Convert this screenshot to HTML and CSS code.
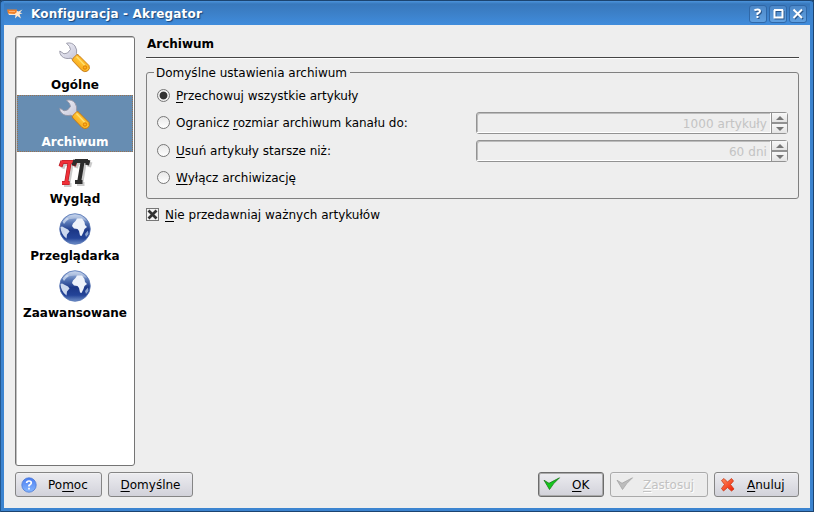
FILE: index.html
```
<!DOCTYPE html>
<html lang="pl">
<head>
<meta charset="utf-8">
<title>Konfiguracja - Akregator</title>
<link rel="stylesheet" href="styles.css">
</head>
<body>
<svg width="0" height="0" class="defs" aria-hidden="true">
  <defs>
    <linearGradient id="steel" x1="0" y1="0" x2="1" y2="1"><stop offset="0" stop-color="#f4f4fa"/><stop offset="1" stop-color="#c0c0d4"/></linearGradient>
    <linearGradient id="amber" x1="0" y1="1" x2="1" y2="0"><stop offset="0" stop-color="#e88a08"/><stop offset=".5" stop-color="#ffc030"/><stop offset="1" stop-color="#f09a10"/></linearGradient>
    <linearGradient id="sea" x1="0" y1="0" x2="0" y2="1"><stop offset="0" stop-color="#b4c8e8"/><stop offset=".3" stop-color="#5474b4"/><stop offset=".55" stop-color="#1c3888"/><stop offset=".8" stop-color="#244498"/><stop offset="1" stop-color="#7090c8"/></linearGradient>
    <linearGradient id="help" x1="0" y1="0" x2="0" y2="1"><stop offset="0" stop-color="#4a7cf0"/><stop offset="1" stop-color="#86b8ff"/></linearGradient>
    <linearGradient id="red" x1="0" y1="0" x2="1" y2="1"><stop offset="0" stop-color="#ff9060"/><stop offset="1" stop-color="#f01800"/></linearGradient>
    <symbol id="wrench" viewBox="0 0 32 32">
      <path d="M12 17 16 13 29 26Q30 30 26 30Q22 29 21 27Z" fill="#999" opacity=".35"/>
      <path d="M7.500 1.200Q13 0 16 4Q18.500 8 17.500 11.500L20 14.500 15.500 18.500 12 16.200Q6 17.500 2.500 14Q.5 11.500 .8 9L5 11.800 8.500 11 11.500 7.500 10.500 4.500Z" fill="url(#steel)" stroke="#9494a4" stroke-width=".9"/>
      <path d="M17.700 12.700Q19 12.200 20.500 14L30 23.500Q31.500 27 28.500 29Q25.500 30.500 23 28.500L13.800 19Q12.800 17.500 14 16.300Z" fill="url(#amber)" stroke="#c07008" stroke-width=".8"/>
      <path d="M17.500 14.500 26 23.500" stroke="#ffe070" stroke-width="1.500"/>
      <circle cx="26" cy="25.500" r="1.700" fill="#ffb020" stroke="#d87800" stroke-width=".9"/>
    </symbol>
    <symbol id="globe" viewBox="0 0 32 32">
      <circle cx="16" cy="16" r="15.300" fill="url(#sea)" stroke="#5474b4" stroke-width=".8"/>
      <path d="M1.500 14Q3 13 5 14.500L9 16.500 10.500 18.500 8 21.500 7.500 25.500Q1.500 21 1.500 14Z" fill="#ccd8ee"/>
      <path d="M3.500 8.500 8 4.500 10 6 7 8.500 5 11Z" fill="#b4c6e4"/>
      <path d="M14 10.500 16.500 8 18 5.500 23 5.500 25.500 9 26 12 28 14 25.500 16 24.500 19 22.500 23 21 22.500 20 18 18.500 16 15 15.500 13 13Z" fill="#eef2fa"/>
      <path d="M26 21 29 17.500 29.500 21 27 24Z" fill="#8ca4d0"/>
      <path d="M4 8Q9 1 16 1.500Q24 1.500 28 8Q16 3 4 8Z" fill="#fff" opacity=".3"/>
    </symbol>
    <symbol id="slab" viewBox="0 0 32 34">
      <path d="M5 6H18M12.700 6 9.300 26M5 27H12.500M5.500 5 3.500 10.500M18.500 5 17 10"/>
    </symbol>
    <symbol id="check" viewBox="0 0 18 16"><path d="M1 3.200 6 6.300 16.500 .8Q10 6.500 6.500 12.500Q4.500 9 1 3.200Z"/></symbol>
  </defs>
</svg>
<div class="window">
  <header class="titlebar">
    <svg class="app-icon" width="16" height="12" viewBox="0 0 16 12">
      <path d="M8 2 11.500 3.500 15.500 1.500 13 4.500 15.500 5.200 12.500 6.200 14 10.500 10.500 8 8 10.500 8.500 7 2 7 1 5Z" fill="#ffe8d0"/>
      <path d="M0 1.500H10L9.500 4.500 7.500 6 1 5.500Z" fill="#f08028"/><path d="M2 3.500H8" stroke="#ffb070" stroke-width="1"/>
    </svg>
    <h1>Konfiguracja - Akregator</h1>
    <div class="controls">
      <button class="ctl" aria-label="Pomoc"><svg width="16" height="16"><path d="M4.500 5.500Q5 4.500 7.500 4.500Q10 4.500 10 6.200Q10 7.500 7.500 8.500V10M7.500 11V13"/></svg></button>
      <button class="ctl" aria-label="Maksymalizuj"><svg width="16" height="16"><path d="M4 5H13M4.500 5V12.500H12.500V5" stroke-width="1.400"/></svg></button>
      <button class="ctl" aria-label="Zamknij"><svg width="16" height="16"><path d="M3.500 4.500 12 13M12 4.500 3.500 13"/></svg></button>
    </div>
  </header>
  <div class="body">
    <div class="columns">
      <nav class="sidebar">
        <a class="item"><svg width="32" height="32"><use href="#wrench"/></svg><span>Ogólne</span></a>
        <a class="item selected"><svg width="32" height="32"><use href="#wrench"/></svg><span>Archiwum</span></a>
        <a class="item"><svg width="32" height="32" class="fonts">
          <g class="t-shade"><use href="#slab" x="0" y="2" width="32" height="34"/><use href="#slab" x="13" y="1" width="32" height="34"/></g>
          <use href="#slab" x="-2" y="0" width="32" height="34" class="t-red-edge"/><use href="#slab" x="-2" y="0" width="32" height="34" class="t-red"/>
          <use href="#slab" x="11" y="-1" width="32" height="34" class="t-black"/></svg><span>Wygląd</span></a>
        <a class="item"><svg width="32" height="32"><use href="#globe"/></svg><span>Przeglądarka</span></a>
        <a class="item"><svg width="32" height="32"><use href="#globe"/></svg><span>Zaawansowane</span></a>
      </nav>
      <main>
        <h2>Archiwum</h2>
        <fieldset>
          <legend>Domyślne ustawienia archiwum</legend>
          <div class="row"><i class="radio on"></i><label><u>P</u>rzechowuj wszystkie artykuły</label></div>
          <div class="row spinrow"><i class="radio"></i><label>Ogranicz <u>r</u>ozmiar archiwum kanału do:</label>
            <div class="spin"><span>1000 artykuły</span><div class="steps"><b><i class="up"></i></b><b><i class="down"></i></b></div></div></div>
          <div class="row spinrow"><i class="radio"></i><label><u>U</u>suń artykuły starsze niż:</label>
            <div class="spin"><span>60 dni</span><div class="steps"><b><i class="up"></i></b><b><i class="down"></i></b></div></div></div>
          <div class="row"><i class="radio"></i><label><u>W</u>yłącz archiwizację</label></div>
        </fieldset>
        <div class="checkrow"><span class="checkbox"><svg width="11" height="11"><path d="M1.500 1.500 9.500 9.500M9.500 1.500 1.500 9.500"/></svg></span><label><u>N</u>ie przedawniaj ważnych artykułów</label></div>
      </main>
    </div>
    <footer>
      <button class="btn help"><svg width="16" height="16"><circle cx="8" cy="8" r="7.200" fill="url(#help)" stroke="#4878d8" stroke-width=".8"/><path d="M5.600 6Q5.800 4 8 4Q10.300 4 10.300 6Q10.300 7 8 8.500V9.500M8 10.700V12.500" fill="none" stroke="#fff" stroke-width="1.700"/></svg><span>Po<u>m</u>oc</span></button>
      <button class="btn defaults"><span><u>D</u>omyślne</span></button>
      <button class="btn ok"><svg width="18" height="16" fill="#12c81c" stroke="#187818" stroke-width=".8"><use href="#check"/></svg><span><u>O</u>K</span></button>
      <button class="btn apply" disabled><svg width="18" height="16" fill="#bcbcbc" stroke="#a4a4a4" stroke-width=".8"><use href="#check"/></svg><span><u>Z</u>astosuj</span></button>
      <button class="btn cancel"><svg width="16" height="16"><path d="M1.500 3.500 4 1.500 7.500 5 11.500 1.500 13.500 4 10.500 7.500 14 12 11.500 14 7.500 10.500 3.500 14 1.500 11.500 4.500 7.500Z" fill="url(#red)" stroke="#c83818" stroke-width=".8"/></svg><span><u>A</u>nuluj</span></button>
    </footer>
  </div>
</div>
</body>
</html>
```
FILE: styles.css
```
* { box-sizing: border-box; }
body { margin: 0; font: 12px/14px "DejaVu Sans", sans-serif; color: #000; background: #1c3c60; }
.defs { position: absolute; }
svg { display: block; flex: none; }
h1, h2 { margin: 0; font-size: 12px; font-weight: bold; }
button { font: inherit; color: inherit; padding: 0; margin: 0; }
u { text-decoration: underline; text-decoration-thickness: 1px; text-underline-offset: 2px; text-decoration-skip-ink: none; }

.window { width: 814px; height: 512px; display: flex; flex-direction: column; padding: 1px 4px 4px; border-radius: 4px 4px 0 0; background: #3c84d0; box-shadow: inset 0 1px #1c4470, inset 1px 0 #245890, inset -1px -1px #1c4470; }
.titlebar { height: 24px; flex: none; display: flex; align-items: center; padding: 0 3px; background: linear-gradient(#4c94dc, #3878bc 3px, #3c80c8 12px, #408cdc); }
.app-icon { margin-top: 1px; }
.titlebar h1 { margin-left: 8px; padding-top: 1px; flex: 1; color: #fff; letter-spacing: .17px; text-shadow: 1px 1px 1px #1c4474; }
.controls { display: flex; gap: 2px; padding-top: 1px; }
.ctl { width: 18px; height: 18px; border: 1px solid #3068a8; border-radius: 3px; background: linear-gradient(#4c88c8, #60a0e0); }
.ctl path { fill: none; stroke: #fff; stroke-width: 2; }
.ctl svg { margin-top: -1px; filter: drop-shadow(1px 1px 0 #285488); }

.body { flex: 1; display: flex; flex-direction: column; padding: 11px 11px; background: #eee; }
.columns { display: flex; gap: 11px; height: 430px; }
.sidebar { width: 120px; border: 1px solid #747474; border-radius: 3px; padding: 1px; background: #fff; box-shadow: inset 1px 1px #c0c0c0; }
.item { height: 57px; display: flex; flex-direction: column; align-items: center; padding-top: 4px; font-weight: bold; }
.item span { margin-top: 4px; }
.selected { color: #fff; background: #678db2; outline: 1px dotted #987250; outline-offset: -1px; }
.fonts { overflow: visible; fill: none; stroke-width: 4; }
.t-red { stroke: #f03038; stroke-width: 2.800; }
.t-red-edge { stroke: #a81820; }
.t-black { stroke: #2c2c2c; }
.t-shade { stroke: #000; opacity: .2; }

main { flex: 1; }
h2 { height: 22px; padding: 1px 1px 0; border-bottom: 1px solid #444; box-shadow: 0 1px #fff; }
fieldset { position: relative; margin: 14px 0 0; height: 127px; border: 1px solid #808080; border-radius: 3px; padding: 14px 10px 0; min-width: 0; }
legend { position: absolute; left: 7px; top: -7px; padding: 0 3px 0 2px; background: #eee; }
.row { display: flex; align-items: center; height: 18px; }
.spinrow { height: 22px; margin-top: 7px; }
.spinrow + .spinrow { margin-top: 6px; }
.spinrow + .row:last-child { margin-top: 7px; }
.radio { width: 13px; height: 13px; flex: none; margin-bottom: 2px; border: 1px solid #777; border-radius: 50%; background: linear-gradient(#e8e8e8, #fff); }
.radio.on { background: radial-gradient(circle, #333 0 3.500px, #f0f0f0 4.300px); }
.row label { margin-left: 6px; }
.spin { margin-left: auto; width: 312px; height: 22px; display: flex; border: 1px solid #929292; border-radius: 3px; box-shadow: inset 1px 1px #bbb; color: #c3c3c3; letter-spacing: .08px; }
.spin span { flex: 1; text-align: right; padding: 4px 3px 0; border-right: 1px solid #fff; border-bottom: 1px solid #fff; }
.steps { width: 16px; border-left: 1px solid #929292; display: flex; flex-direction: column; }
.steps b { flex: 1; display: grid; place-items: center; background: linear-gradient(#f8f8f8, #e4e4e4); }
.steps b + b { border-top: 2px solid #929292; }
.up, .down { border: 4px solid transparent; border-top: 0; border-bottom: 4px solid #777; }
.down { border-bottom: 0; border-top: 4px solid #777; }
.checkrow { display: flex; align-items: center; margin-top: 9px; height: 14px; }
.checkbox { width: 13px; height: 13px; margin-bottom: 2px; border: 1px solid #777; background: #f4f4f4; }
.checkbox path { stroke: #333; stroke-width: 2.700; }
.checkrow label { margin-left: 6px; }

footer { display: flex; margin-top: 6px; gap: 6px; }
.btn { height: 25px; border: 1px solid #858585; border-radius: 3px; display: flex; align-items: center; background: linear-gradient(#ececf0, #d2d2da); box-shadow: inset 0 1px #f2f2f4; }
.help { width: 87px; padding-left: 5px; }
.help span { margin-left: 11px; }
.defaults { width: 85px; justify-content: center; }
.ok { width: 66px; margin-left: auto; padding-left: 4px; border-color: #6c6c6c; box-shadow: inset 0 0 0 1px #aaa; }
.ok span { margin-left: 11px; }
.apply { width: 98px; padding-left: 5px; color: #c2c2c2; border-color: #aaa; background: #ececec; text-shadow: 1px 1px #fff; }
.apply span { margin-left: 9px; }
.cancel { width: 85px; padding-left: 5px; }
.cancel span { margin-left: 11px; }
```
